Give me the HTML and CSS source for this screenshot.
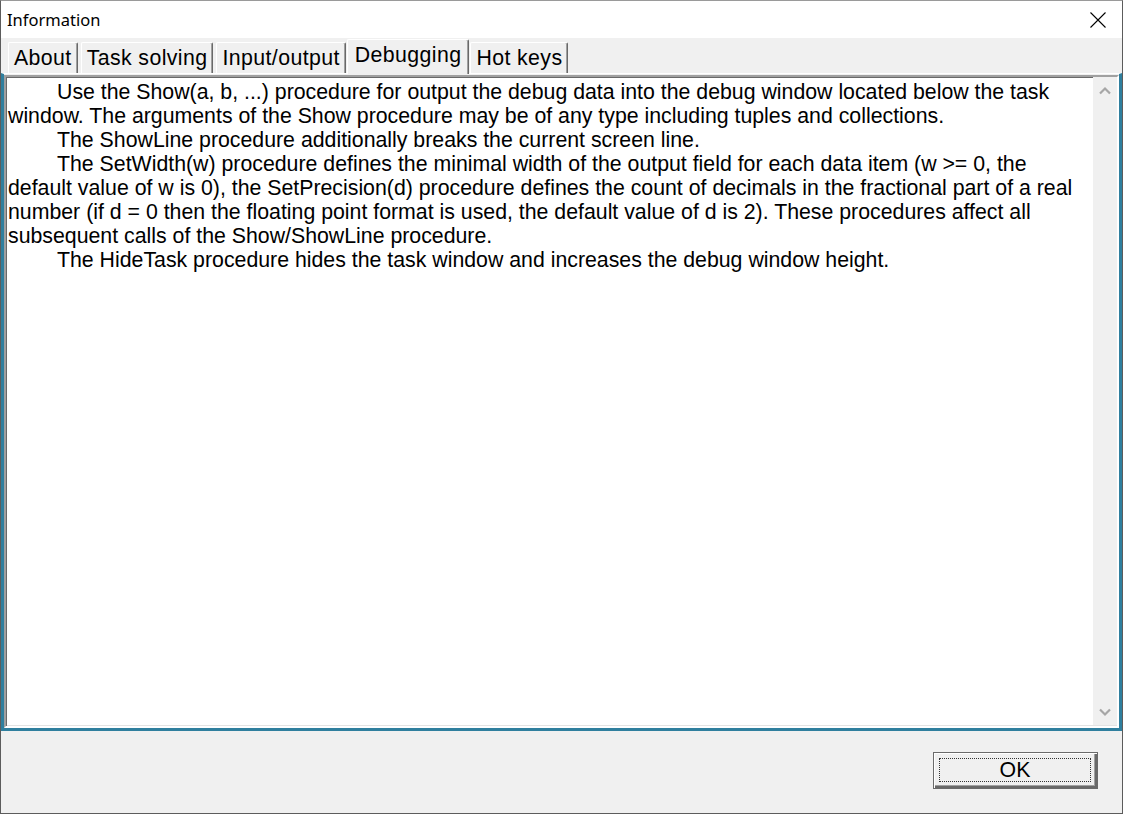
FILE: index.html
```html
<!DOCTYPE html>
<html>
<head>
    <meta charset="UTF-8">
    <title>Information</title>
    <link rel="stylesheet" href="styles.css">
</head>
<body>
    <div class="window">
        <div class="titlebar">
            <span class="title">Information</span>
            <svg class="close" width="16" height="16" viewBox="0 0 16 16">
                <path d="M0.5 0.5 L15.5 15.5 M15.5 0.5 L0.5 15.5" stroke="#000" stroke-width="1.1" fill="none"/>
            </svg>
        </div>

        <div class="tabs">
            <div class="tab">About</div>
            <div class="tab">Task solving</div>
            <div class="tab">Input/output</div>
            <div class="tab active">Debugging</div>
            <div class="tab">Hot keys</div>
        </div>

        <div class="page">
            <div class="memo">
                <div class="text">
                    <p>Use the Show(a, b, ...) procedure for output the debug data into the debug window located below the task window. The arguments of the Show procedure may be of any type including tuples and collections.</p>
                    <p>The ShowLine procedure additionally breaks the current screen line.</p>
                    <p>The SetWidth(w) procedure defines the minimal width of the output field for each data item (w &gt;= 0, the default value of w is 0), the SetPrecision(d) procedure defines the count of decimals in the fractional part of a real number (if d = 0 then the floating point format is used, the default value of d is 2). These procedures affect all subsequent calls of the Show/ShowLine procedure.</p>
                    <p>The HideTask procedure hides the task window and increases the debug window height.</p>
                </div>
                <div class="scrollbar">
                    <svg class="arrow" width="14" height="10" viewBox="0 0 14 10">
                        <path d="M2 7.5 L7 2.5 L12 7.5" stroke="#a6a6a6" stroke-width="2.2" fill="none"/>
                    </svg>
                    <svg class="arrow" width="14" height="10" viewBox="0 0 14 10">
                        <path d="M2 2.5 L7 7.5 L12 2.5" stroke="#a6a6a6" stroke-width="2.2" fill="none"/>
                    </svg>
                </div>
            </div>
        </div>

        <div class="footer">
            <button class="ok"><span class="focus">OK</span></button>
        </div>
    </div>
</body>
</html>
```

FILE: styles.css
```css
* {
    box-sizing: border-box;
}

body {
    margin: 0;
    padding: 0;
    background: #f0f0f0;
    font-family: "Liberation Sans", Arial, sans-serif;
    font-size: 21.3px;
    line-height: 24px;
    color: #000;
}

.window {
    width: 1123px;
    height: 814px;
    border: 1px solid #5c5c5c;
    border-top-color: #9a9a9a;
    background: #f0f0f0;
    display: flex;
    flex-direction: column;
}

/* Title bar */
.titlebar {
    height: 37px;
    background: #fff;
    display: flex;
    align-items: center;
    justify-content: space-between;
    padding: 0 16px 0 6px;
}

.title {
    font-family: "Noto Sans", "Open Sans", sans-serif;
    font-size: 16.5px;
    line-height: 20px;
    color: #000;
    margin-top: 1px;
}

.close {
    display: block;
    margin-top: 1px;
}

/* Tabs */
.tabs {
    height: 35px;
    display: flex;
    align-items: flex-end;
    padding-left: 7px;
    position: relative;
    z-index: 1;
}

.tab {
    height: 31px;
    padding: 3px 5px 0 5px;
    margin-right: 3px;
    background: #f0f0f0;
    border-top: 1px solid #fff;
    border-left: 1px solid #fff;
    border-right: 1px solid #696969;
    box-shadow: inset -1px 0 0 #a0a0a0;
    border-top-left-radius: 2px;
    border-top-right-radius: 2px;
    white-space: nowrap;
    letter-spacing: 0.4px;
}

.tab.active {
    height: 35px;
    margin: 0 1px -1px -2px;
    padding: 3px 7px 0 7px;
}

/* Tab page */
.page {
    height: 658px;
    border-top: 1px solid #fff;
    border-left: 3px solid #2f7f9e;
    border-right: 3px solid #2f7f9e;
    border-bottom: 3px solid #2f7f9e;
    padding-top: 1px;
    display: flex;
    flex-direction: column;
}

.memo {
    flex: 1;
    display: flex;
    background: #fff;
    border-top: 2px solid #a0a0a0;
    border-left: 2px solid #a0a0a0;
    border-right: 2px solid #fff;
    border-bottom: 2px solid #fff;
    box-shadow: inset 1px 1px 0 #696969, inset -1px -1px 0 #e3e3e3;
}

.text {
    flex: 1;
    padding: 3px 2px 0 2px;
    overflow: hidden;
}

.text p {
    margin: 0;
    text-indent: 49px;
}

.scrollbar {
    width: 24px;
    background: #f0f0f0;
    display: flex;
    flex-direction: column;
    justify-content: space-between;
    align-items: center;
    padding: 9px 0 8px 0;
    margin-bottom: 1px;
}

.arrow {
    display: block;
}

/* Footer */
.footer {
    flex: 1;
    display: flex;
    justify-content: flex-end;
    align-items: flex-start;
    padding: 21px 24px 0 0;
}

.ok {
    width: 165px;
    height: 37px;
    padding: 4px;
    background: #f0f0f0;
    border: 1px solid #6a6a6a;
    box-shadow: inset 1px 1px 0 #fff, inset -2px -2px 0 #696969, inset -3px -3px 0 #a0a0a0;
    font-family: "Liberation Sans", Arial, sans-serif;
    font-size: 21.3px;
    line-height: 24px;
    color: #000;
    display: flex;
}

.focus {
    flex: 1;
    border: 1px dotted #333;
    margin: 1px 2px 2px 1px;
    display: flex;
    align-items: center;
    justify-content: center;
}
```
